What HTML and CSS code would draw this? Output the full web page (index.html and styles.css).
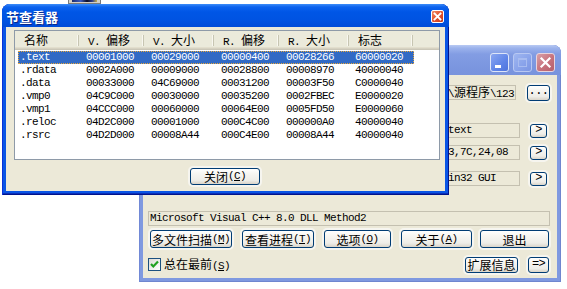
FILE: index.html
```html
<!DOCTYPE html>
<html>
<head>
<meta charset="utf-8">
<title>节查看器</title>
<link rel="stylesheet" href="styles.css">
</head>
<body>
<div class="desk">
  <div class="topicon"><span></span></div>

  <div class="win back">
    <div class="title btitle">
      <span class="ttext"></span>
      <div class="tbtns">
        <span class="tb tmin"><i></i></span>
        <span class="tb tmax"><i></i></span>
        <span class="tb tcls"><svg width="19" height="19" viewBox="0 0 19 19"><path d="M5.5 5.5 L13.5 13.5 M13.5 5.5 L5.5 13.5" stroke="#fff" stroke-width="2.2" stroke-linecap="square"/></svg></span>
      </div>
    </div>
    <div class="client bclient">
      <div class="brow rowa">
        <div class="field fa"><span><span class="m">\</span>源程序<span class="m">\123</span></span></div>
        <span class="btn sbtn dots m">...</span>
      </div>
      <div class="brow rowb">
        <div class="field fs"><span class="m">text</span></div>
        <span class="btn abtn m">&gt;</span>
      </div>
      <div class="brow rowc">
        <div class="field fs"><span class="m">3,7C,24,08</span></div>
        <span class="btn abtn m">&gt;</span>
      </div>
      <div class="brow rowd">
        <div class="field fs"><span class="m">in32 GUI</span></div>
        <span class="btn abtn m">&gt;</span>
      </div>
      <div class="field sig"><span class="m">Microsoft Visual C++ 8.0 DLL Method2</span></div>
      <div class="mainbtns">
        <span class="btn mb b1">多文件扫描<span class="m">(<u>M</u>)</span></span>
        <span class="btn mb b2">查看进程<span class="m">(<u>T</u>)</span></span>
        <span class="btn mb b3">选项<span class="m">(<u>O</u>)</span></span>
        <span class="btn mb b4">关于<span class="m">(<u>A</u>)</span></span>
        <span class="btn mb b5">退出</span>
      </div>
      <div class="bottomrow">
        <span class="chk"><svg width="11" height="11" viewBox="0 0 11 11"><path d="M2 5 L4.3 7.5 L9 2.5" stroke="#21a121" stroke-width="2.2" fill="none"/></svg></span>
        <span class="chklbl">总在最前<span class="m">(<u>S</u>)</span></span>
        <span class="btn xbtn">扩展信息</span>
        <span class="btn arrbtn m">=&gt;</span>
      </div>
    </div>
  </div>

  <div class="win front">
    <div class="title ftitle">
      <span class="ftext">节查看器</span>
      <span class="fclose"><svg width="13" height="13" viewBox="0 0 13 13"><path d="M3.5 3.5 L9.5 9.5 M9.5 3.5 L3.5 9.5" stroke="#fff" stroke-width="1.8" stroke-linecap="square"/></svg></span>
    </div>
    <div class="client fclient">
      <div class="list">
        <div class="hdr">
          <span>名称</span>
          <span><b class="m">V. </b>偏移</span>
          <span><b class="m">V. </b>大小</span>
          <span><b class="m">R. </b>偏移</span>
          <span><b class="m">R. </b>大小</span>
          <span>标志</span>
          <span class="last"></span>
        </div>
        <div class="rows m">
          <div class="r sel"><span>.text</span><span>00001000</span><span>00029000</span><span>00000400</span><span>00028266</span><span>60000020</span></div>
          <div class="r"><span>.rdata</span><span>0002A000</span><span>00009000</span><span>00028800</span><span>00008970</span><span>40000040</span></div>
          <div class="r"><span>.data</span><span>00033000</span><span>04C69000</span><span>00031200</span><span>00003F50</span><span>C0000040</span></div>
          <div class="r"><span>.vmp0</span><span>04C9C000</span><span>00030000</span><span>00035200</span><span>0002FBEC</span><span>E0000020</span></div>
          <div class="r"><span>.vmp1</span><span>04CCC000</span><span>00060000</span><span>00064E00</span><span>0005FD50</span><span>E0000060</span></div>
          <div class="r"><span>.reloc</span><span>04D2C000</span><span>00001000</span><span>000C4C00</span><span>000000A0</span><span>40000040</span></div>
          <div class="r"><span>.rsrc</span><span>04D2D000</span><span>00008A44</span><span>000C4E00</span><span>00008A44</span><span>40000040</span></div>
        </div>
      </div>
      <span class="btn closebtn">关闭<span class="m">(<u>C</u>)</span></span>
    </div>
  </div>
</div>
</body>
</html>
```

FILE: styles.css
```css
* { box-sizing: border-box; }
html, body { margin: 0; padding: 0; background: #fff; }
body {
  width: 567px; height: 289px; overflow: hidden;
  font-family: "Noto Sans CJK SC", "Liberation Sans", sans-serif;
  font-size: 12px; color: #000;
}
.desk { position: relative; width: 567px; height: 289px; }

.m {
  font-family: "Liberation Mono", "Noto Sans CJK SC", monospace;
  font-size: 11px; letter-spacing: -0.6px; font-weight: normal;
}
u { text-decoration: underline; text-underline-offset: 1px; }

/* tiny icon peeking at the top */
.topicon {
  position: absolute; left: 68px; top: -4px; width: 33px; height: 8px;
  background: #d4d0c8; border: 1px solid #7a7a7a; padding: 1px 3px;
}
.topicon span {
  display: block; height: 100%;
  background: linear-gradient(90deg, #1c2c6c 0, #3c5cc0 35%, #0c0c20 60%, #2a3a8c 80%, #c8b048 100%);
}

/* windows */
.win {
  position: absolute; display: flex; flex-direction: column;
  border-radius: 8px 8px 0 0; overflow: hidden;
}
.title { display: flex; justify-content: space-between; flex: none; }
.client { flex: 1; background: #ece9d8; }

/* front (active) window */
.front {
  left: 2px; top: 4px; width: 447px; height: 191px;
  background: #0a55e5; padding: 0 4px 4px;
  box-shadow: inset 1px 0 #0831d9, inset -1px 0 #00138c, inset 0 -1px #00138c, inset 0 -2px #0a2fb8;
}
.ftitle {
  height: 23px; margin: 0 -4px; padding: 0 5px 0 4px; align-items: center;
  background: linear-gradient(#3d8df8 0, #0c62ee 3px, #0056e6 8px, #0053e2 16px, #004bd8 23px);
}
.ftext {
  color: #fff; font-weight: bold; font-size: 13px; line-height: 15px;
  text-shadow: 1px 1px #0b2a8a; margin-top: 1px;
}
.fclose {
  width: 13px; height: 13px; border: 1px solid #fff; border-radius: 2px;
  background: linear-gradient(135deg, #f08a66, #e0502c 55%, #c53a1a);
  display: flex; margin-top: 1px;
}
.fclose svg { margin: -1px; }
.fclient { display: flex; flex-direction: column; }

.list {
  margin: 3px 0 0 8px; width: 426px; height: 130px;
  border: 1px solid #8e9aa8; background: #fff;
}
.hdr {
  display: grid; grid-template-columns: 64px 65px 70px 65px 70px 64px 1fr;
  height: 19px; background: #ebeadb;
  box-shadow: inset 0 -1px #cbc7b8, inset 0 -2px #d6d2c2, inset 0 -3px #e2decd;
}
.hdr span {
  position: relative; padding-left: 9px; line-height: 18px; white-space: nowrap;
}
.hdr span::after {
  content: ""; position: absolute; right: 0; top: 4px; bottom: 5px; width: 1px;
  background: #c7c5b2; box-shadow: -1px 0 #f8f7f0;
}
.hdr span.last::after { display: none; }

.rows { padding-top: 1px; }
.r {
  display: grid; grid-template-columns: 61px 65px 70px 65px 70px 65px;
  margin-left: 3px; width: 396px; height: 13px; line-height: 13px; white-space: nowrap;
}
.r span { padding-left: 7px; }
.r span:first-child { padding-left: 2px; }
.r span:last-child { padding-left: 6px; }
.r.sel {
  background: #316ac5; color: #fff;
  outline: 1px dotted #e8a83c; outline-offset: -1px;
}

/* buttons */
.btn {
  display: flex; align-items: center; justify-content: center;
  border: 1px solid #003c74; border-radius: 3px;
  background: linear-gradient(#ffffff 0, #f7f6f2 30%, #eeede8 75%, #d9d4c9 100%);
  box-shadow: 0 0 0 2px #f6f5ef;
  font-size: 12px; line-height: 13px; white-space: nowrap; flex: none;
}
.closebtn { width: 70px; height: 17px; margin: 8px 0 0 184px; }

/* back (inactive) window */
.back {
  left: 139px; top: 45px; width: 422px; height: 237px;
  background: #7f99e0; padding: 0 4px 4px;
  box-shadow: inset 1px 0 #7189d6, inset -1px 0 #6f86cf, inset 0 -1px #6f86cf;
}
.btitle {
  height: 30px; margin: 0 -4px; padding: 8px 6px 0 8px; align-items: flex-start;
  background: linear-gradient(#b9caf3 0, #9cb3ec 3px, #839de3 9px, #7c97e0 20px, #7893dd 30px);
}
.ttext { width: 10px; }
.tbtns { display: flex; gap: 4px; }
.tb {
  width: 19px; height: 19px; border: 1px solid #dde5f8; border-radius: 3px;
  position: relative; display: block;
}
.tmin { background: linear-gradient(135deg, #8aa6f0, #5e84e8 60%, #4f74dc); }
.tmin i { position: absolute; left: 4px; bottom: 3px; width: 6px; height: 3px; background: #fff; }
.tmax { background: linear-gradient(135deg, #9fb6f0, #88a2ea 60%, #7b95e2); border-color: #b8c8f2; }
.tmax i { position: absolute; left: 4px; top: 4px; width: 9px; height: 9px; border: 1px solid #a8bcf0; border-top-width: 2px; }
.tcls { background: linear-gradient(135deg, #d8a0a8, #c7727c 55%, #b6606c); border-color: #e8d4dc; }
.tcls svg { position: absolute; left: -1px; top: -1px; }

.bclient { display: flex; flex-direction: column; padding: 0 7px 0 5px; }
.brow { display: flex; align-items: center; }
.field {
  border: 1px solid #c4c0b0; background: #ece9d8; height: 15px;
  display: flex; align-items: center; white-space: nowrap;
  line-height: 13px;
}
.rowa { margin-top: 10px; height: 16px; align-items: flex-start; justify-content: flex-end; }
.fa { width: 230px; justify-content: flex-end; padding-right: 1px; }
.dots { width: 23px; height: 16px; margin-left: 11px; align-items: flex-end; padding-bottom: 2px; }
.rowb, .rowc, .rowd { justify-content: flex-end; height: 15px; }
.rowb { margin-top: 22px; }
.rowc { margin-top: 7px; }
.rowd { margin-top: 11px; }
.fs { width: 81px; padding-left: 8px; }
.abtn { width: 17px; height: 14px; margin: 0 3px 0 10px; }

.sig { margin-top: 25px; height: 15px; padding-left: 1px; }

.mainbtns { display: flex; margin-top: 4px; padding-left: 2px; }
.mb { height: 18px; }
.b1 { width: 82px; }
.b2 { width: 72px; margin-left: 10px; }
.b3 { width: 67px; margin-left: 10px; }
.b4 { width: 71px; margin-left: 10px; }
.b5 { width: 69px; margin-left: 8px; }

.bottomrow { display: flex; align-items: center; margin-top: 8px; height: 17px; }
.chk {
  width: 13px; height: 13px; border: 1px solid #1c5180; flex: none;
  background: linear-gradient(135deg, #dcdbd4, #fff);
  display: flex; align-items: center; justify-content: center;
}
.chklbl { margin-left: 3px; line-height: 14px; }
.xbtn { width: 53px; height: 16px; margin-left: auto; }
.arrbtn { width: 21px; height: 16px; margin-left: 10px; margin-right: 1px; }
```
